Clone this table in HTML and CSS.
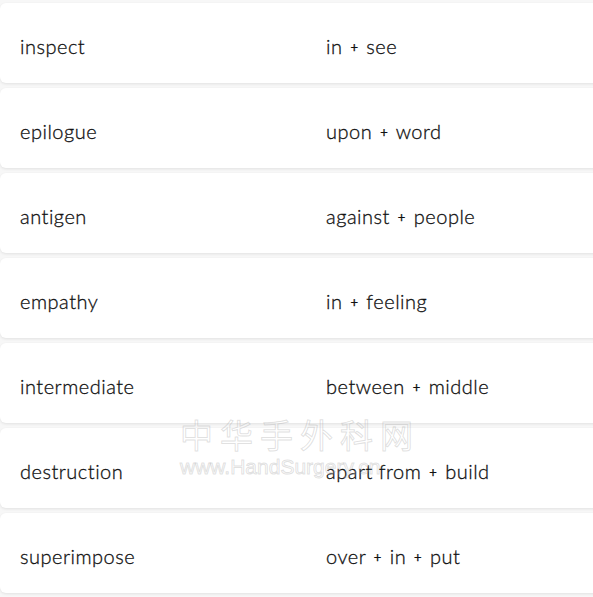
FILE: index.html
```html
<!DOCTYPE html>
<html>
<head>
<meta charset="utf-8">
<link rel="stylesheet" href="styles.css">
</head>
<body>
<div class="watermark">
  <div class="wm-cn">中华手外科网</div>
  <div class="wm-en">www.HandSurgery.cn</div>
</div>
<div class="list">
  <div class="card"><span class="word">inspect</span><span class="meaning">in <span class="plus">+</span> see</span></div>
  <div class="card"><span class="word">epilogue</span><span class="meaning">upon <span class="plus">+</span> word</span></div>
  <div class="card"><span class="word">antigen</span><span class="meaning">against <span class="plus">+</span> people</span></div>
  <div class="card"><span class="word">empathy</span><span class="meaning">in <span class="plus">+</span> feeling</span></div>
  <div class="card"><span class="word">intermediate</span><span class="meaning">between <span class="plus">+</span> middle</span></div>
  <div class="card"><span class="word">destruction</span><span class="meaning">apart from <span class="plus">+</span> build</span></div>
  <div class="card"><span class="word">superimpose</span><span class="meaning">over <span class="plus">+</span> in <span class="plus">+</span> put</span></div>
</div>
</body>
</html>
```
FILE: styles.css
```css
html, body {
  margin: 0;
  padding: 0;
  background: #f7f7f7;
  overflow: hidden;
}
body {
  font-family: Lato, "Noto Sans", sans-serif;
  color: #111;
  position: relative;
  width: 593px;
  height: 597px;
}
.list {
  position: relative;
  display: flex;
  flex-direction: column;
  gap: 5px;
  padding-top: 3px;
}
.card {
  display: grid;
  grid-template-columns: 306px 1fr;
  align-items: center;
  height: 80px;
  margin-right: -20px;
  padding-left: 20px;
  padding-top: 5px;
  box-sizing: border-box;
  background: #fff;
  border-radius: 6px;
  box-shadow: 0 1px 3px rgba(0,0,0,0.09);
  font-size: 20px;
  font-weight: 300;
  letter-spacing: 0.5px;
  -webkit-text-stroke: 0.3px #111;
}
.plus {
  font-size: 13px;
  font-weight: 400;
  position: relative;
  top: -2px;
  padding: 0 2px;
}
.watermark {
  position: absolute;
  z-index: 2;
  left: 180px;
  top: 414px;
  color: transparent;
  -webkit-text-stroke: 1px rgba(160,160,160,0.32);
  pointer-events: none;
}
.wm-cn {
  font-family: "Noto Sans CJK SC", sans-serif;
  font-size: 33px;
  letter-spacing: 7px;
  line-height: 40px;
}
.wm-en {
  font-family: "Liberation Sans", sans-serif;
  font-size: 21px;
  line-height: 26px;
  margin-top: 0px;
}
```
